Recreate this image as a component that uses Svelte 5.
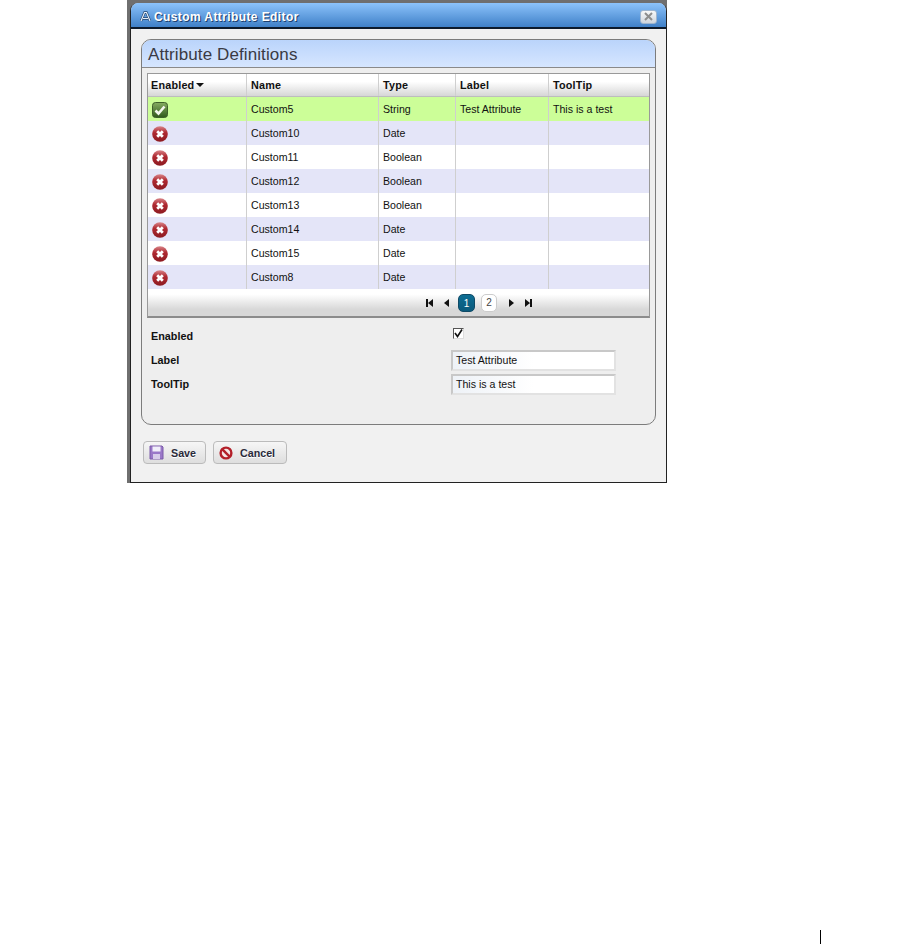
<script>
  const rows = [
    { on: true, name: 'Custom5', type: 'String', label: 'Test Attribute', tip: 'This is a test' },
    { on: false, name: 'Custom10', type: 'Date' },
    { on: false, name: 'Custom11', type: 'Boolean' },
    { on: false, name: 'Custom12', type: 'Boolean' },
    { on: false, name: 'Custom13', type: 'Boolean' },
    { on: false, name: 'Custom14', type: 'Date' },
    { on: false, name: 'Custom15', type: 'Date' },
    { on: false, name: 'Custom8', type: 'Date' }
  ];
</script>

<div class="page">
  <div class="shot">
    <div class="dialog">
      <div class="titlebar">
        <div class="title">
          <svg width="11" height="11" viewBox="0 0 11 11">
            <path d="M1 10 L4.5 1.5 H6.5 L10 10 M3 7.5 H8" fill="none" stroke="#24466f" stroke-width="2.4"/>
            <path d="M1 10 L4.5 1.5 H6.5 L10 10 M3 7.5 H8" fill="none" stroke="#e6eef8" stroke-width="1.2"/>
          </svg>
          <span>Custom Attribute Editor</span>
        </div>
        <div class="close">
          <svg width="9" height="9" viewBox="0 0 9 9"><path d="M1 1 L8 8 M8 1 L1 8" stroke="#8d8d8d" stroke-width="2"/></svg>
        </div>
      </div>

      <div class="content">
        <div class="panel">
          <div class="panel-head">Attribute Definitions</div>

          <div class="table">
            <div class="row head">
              <div class="cell enabled">Enabled<span class="sort"></span></div>
              <div class="cell">Name</div>
              <div class="cell">Type</div>
              <div class="cell">Label</div>
              <div class="cell">ToolTip</div>
            </div>
            {#each rows as r, i}
              <div class="row" class:sel={r.on} class:alt={!r.on && i % 2 === 1}>
                <div class="cell icon">
                  {#if r.on}
                    <svg width="16" height="16" viewBox="0 0 16 16">
                      <defs><linearGradient id="gr" x1="0" y1="0" x2="0" y2="1"><stop offset="0" stop-color="#86ad62"/><stop offset="1" stop-color="#30591c"/></linearGradient></defs>
                      <rect x="0.5" y="0.5" width="15" height="15" rx="3" fill="url(#gr)" stroke="#3f5f2b"/>
                      <path d="M3.5 8.5 L6.5 11.5 L12.5 4.5" fill="none" stroke="#f4f6ee" stroke-width="2.6"/>
                    </svg>
                  {:else}
                    <svg width="16" height="16" viewBox="0 0 16 16">
                      <defs><linearGradient id={'rd' + i} x1="0" y1="0" x2="0" y2="1"><stop offset="0" stop-color="#d9868a"/><stop offset="0.4" stop-color="#b02a32"/><stop offset="1" stop-color="#8c1a20"/></linearGradient></defs>
                      <circle cx="8" cy="8" r="7.8" fill={'url(#rd' + i + ')'}/>
                      <path d="M5.2 5.2 L10.8 10.8 M10.8 5.2 L5.2 10.8" stroke="#fff" stroke-width="2.8"/>
                    </svg>
                  {/if}
                </div>
                <div class="cell text">{r.name}</div>
                <div class="cell text">{r.type}</div>
                <div class="cell text">{r.label ?? ''}</div>
                <div class="cell text">{r.tip ?? ''}</div>
              </div>
            {/each}
            <div class="pager">
              <svg width="7" height="8" viewBox="0 0 7 8"><path d="M0 0H2V8H0Z M7 0V8L2 4Z" fill="#111"/></svg>
              <svg class="prev" width="5" height="8" viewBox="0 0 5 8"><path d="M5 0V8L0 4Z" fill="#111"/></svg>
              <span class="pg cur">1</span>
              <span class="pg">2</span>
              <svg class="next" width="5" height="8" viewBox="0 0 5 8"><path d="M0 0V8L5 4Z" fill="#111"/></svg>
              <svg class="last" width="7" height="8" viewBox="0 0 7 8"><path d="M0 0V8L5 4Z M5 0H7V8H5Z" fill="#111"/></svg>
            </div>
          </div>

          <div class="form">
            <div class="labels">
              <div>Enabled</div>
              <div>Label</div>
              <div>ToolTip</div>
            </div>
            <div class="fields">
              <div class="check">
                <svg width="9" height="9" viewBox="0 0 9 9"><path d="M1 4 L3.5 7.5 L8 0.5" fill="none" stroke="#111" stroke-width="1.6"/></svg>
              </div>
              <div class="input">Test Attribute</div>
              <div class="input">This is a test</div>
            </div>
          </div>
        </div>

        <div class="buttons">
          <div class="btn save">
            <svg width="15" height="15" viewBox="0 0 15 15">
              <path d="M1 1 H13 L14 2 V14 H1 Z" fill="#9a78c8" stroke="#7a5aa8"/>
              <rect x="3.5" y="1.5" width="8" height="5" fill="#f1effa"/>
              <rect x="4" y="9" width="7" height="5" fill="#d8cdea"/>
            </svg>
            <span>Save</span>
          </div>
          <div class="btn cancel">
            <svg width="14" height="14" viewBox="0 0 14 14">
              <circle cx="7" cy="7" r="5.4" fill="#f4e6e6" stroke="#b3202a" stroke-width="2.4"/>
              <path d="M3.4 3.4 L10.6 10.6" stroke="#b3202a" stroke-width="2.4"/>
            </svg>
            <span>Cancel</span>
          </div>
        </div>
      </div>
    </div>
  </div>
  <div class="foot"><span class="rule"></span></div>
</div>

<style>
  :global(body) {
    background: #fff;
  }

  .page {
    width: 900px;
    height: 944px;
    display: flex;
    flex-direction: column;
    justify-content: space-between;
    font-family: "Liberation Sans", sans-serif;
    color: #111;
  }

  .shot {
    margin-left: 127px;
    width: 540px;
    height: 483px;
    box-sizing: border-box;
    padding: 3px 0 0 3px;
    background: #6f6f6f;
  }

  .dialog {
    height: 480px;
    background: #f1f1f1;
    border: 1px solid #222;
    border-top: 0;
    border-radius: 8px 8px 0 0;
    display: flex;
    flex-direction: column;
    overflow: hidden;
    box-sizing: border-box;
  }

  .titlebar {
    height: 26px;
    flex: none;
    box-sizing: border-box;
    border-bottom: 2px solid #0c1a2c;
    background: linear-gradient(#8cc3fb, #3f80c8);
    display: flex;
    align-items: center;
    justify-content: space-between;
    padding: 3px 9px 0 9px;
  }

  .title {
    display: flex;
    align-items: center;
    gap: 3px;
    color: #fff;
    font-size: 12px;
    font-weight: 700;
    letter-spacing: 0.4px;
    text-shadow: 1px 1px 0 #1d3f6e;
  }

  .close {
    width: 17px;
    height: 14px;
    box-sizing: border-box;
    border-radius: 3px;
    border: 1px solid #9fb6d0;
    background: linear-gradient(#f8f8f8, #cfd6de);
    display: flex;
    align-items: center;
    justify-content: center;
  }

  .content {
    flex: 1;
    padding: 10px 10px 0 10px;
  }

  .panel {
    height: 386px;
    box-sizing: border-box;
    border: 1px solid #7c7c7c;
    border-radius: 10px;
    background: #eee;
    padding-bottom: 1px;
  }

  .panel-head {
    height: 28px;
    box-sizing: border-box;
    border-radius: 9px 9px 0 0;
    border-bottom: 1px solid #8a8a8a;
    background: linear-gradient(#bad4fb, #d6e6ff);
    font-size: 17px;
    letter-spacing: 0.1px;
    color: #3a3a44;
    padding: 6px 0 0 6px;
    line-height: 18px;
  }

  .table {
    margin: 5px 5px 0 5px;
    border: 1px solid #999;
    border-bottom: 2px solid #8c8c8c;
    background: #fff;
    height: 245px;
    box-sizing: border-box;
  }

  .row {
    display: grid;
    grid-template-columns: 99px 132px 77px 93px 1fr;
    height: 24px;
    font-size: 10.6px;
    line-height: 25px;
    background: #fff;
  }

  .row.head {
    height: 23px;
    box-sizing: border-box;
    font-size: 10.8px;
    font-weight: 700;
    letter-spacing: 0.2px;
    line-height: 23px;
    background: linear-gradient(#fff 35%, #d6d6d6);
    border-bottom: 1px solid #bdbdbd;
  }

  .row.sel {
    background: #ccfe98;
  }

  .row.alt {
    background: #e4e5f8;
  }

  .cell {
    padding-left: 4px;
    border-right: 1px solid #cfcfcf;
    white-space: nowrap;
    overflow: hidden;
  }

  .cell:last-child {
    border-right: 0;
  }

  .cell.icon {
    display: flex;
    align-items: center;
    padding-top: 1px;
  }

  .enabled {
    display: flex;
    align-items: center;
    gap: 2px;
    padding-left: 3px;
  }

  .sort {
    width: 0;
    height: 0;
    border-left: 4px solid transparent;
    border-right: 4px solid transparent;
    border-top: 4px solid #111;
  }

  .pager {
    height: 27px;
    background: linear-gradient(#fff 20%, #d8d8d8 75%);
    display: flex;
    align-items: center;
    padding-left: 278px;
    box-sizing: border-box;
  }

  .prev {
    margin-left: 11px;
  }

  .next {
    margin-left: 12px;
  }

  .last {
    margin-left: 11px;
  }

  .pg {
    width: 16px;
    height: 18px;
    margin-left: 6px;
    box-sizing: border-box;
    border-radius: 5px;
    border: 1px solid #ccc;
    background: #fff;
    font-size: 10px;
    line-height: 15px;
    text-align: center;
    color: #444;
  }

  .pg.cur {
    width: 17px;
    margin-left: 9px;
    border-color: #0f4a66;
    background: linear-gradient(#0d6d93, #0b5a7c);
    color: #fff;
    line-height: 17px;
  }

  .form {
    display: flex;
    padding: 10px 0 0 9px;
  }

  .labels {
    width: 300px;
    font-size: 10.8px;
    font-weight: 700;
    line-height: 24px;
    margin-top: -4px;
  }

  .fields {
    display: flex;
    flex-direction: column;
  }

  .check {
    width: 11px;
    height: 11px;
    box-sizing: border-box;
    margin: 0 0 11px 2px;
    border: 1px solid #555;
    border-right-color: #ddd;
    border-bottom-color: #ddd;
    background: #fff;
    display: flex;
    align-items: center;
    justify-content: center;
  }

  .input {
    width: 165px;
    height: 21px;
    box-sizing: border-box;
    margin-bottom: 3px;
    padding-left: 3px;
    border: 2px solid #e2e2e2;
    border-top-color: #c8c8c8;
    border-left-color: #c8c8c8;
    background: linear-gradient(90deg, #eef2f7, #fff 50%);
    font-size: 10.6px;
    line-height: 17px;
  }

  .buttons {
    display: flex;
    gap: 7px;
    margin: 16px 0 0 2px;
  }

  .btn {
    height: 23px;
    box-sizing: border-box;
    display: flex;
    align-items: center;
    border: 1px solid #bbb;
    border-radius: 4px;
    background: linear-gradient(#f6f6f6, #dedede);
    font-size: 10.7px;
    font-weight: 700;
    color: #2a2a3a;
    text-shadow: 0 1px 0 #fff;
    padding-left: 5px;
    gap: 7px;
  }

  .save {
    width: 63px;
  }

  .cancel {
    width: 74px;
  }

  .foot {
    height: 14px;
    display: flex;
    padding-left: 820px;
  }

  .rule {
    width: 1px;
    height: 14px;
    background: #000;
  }
</style>
